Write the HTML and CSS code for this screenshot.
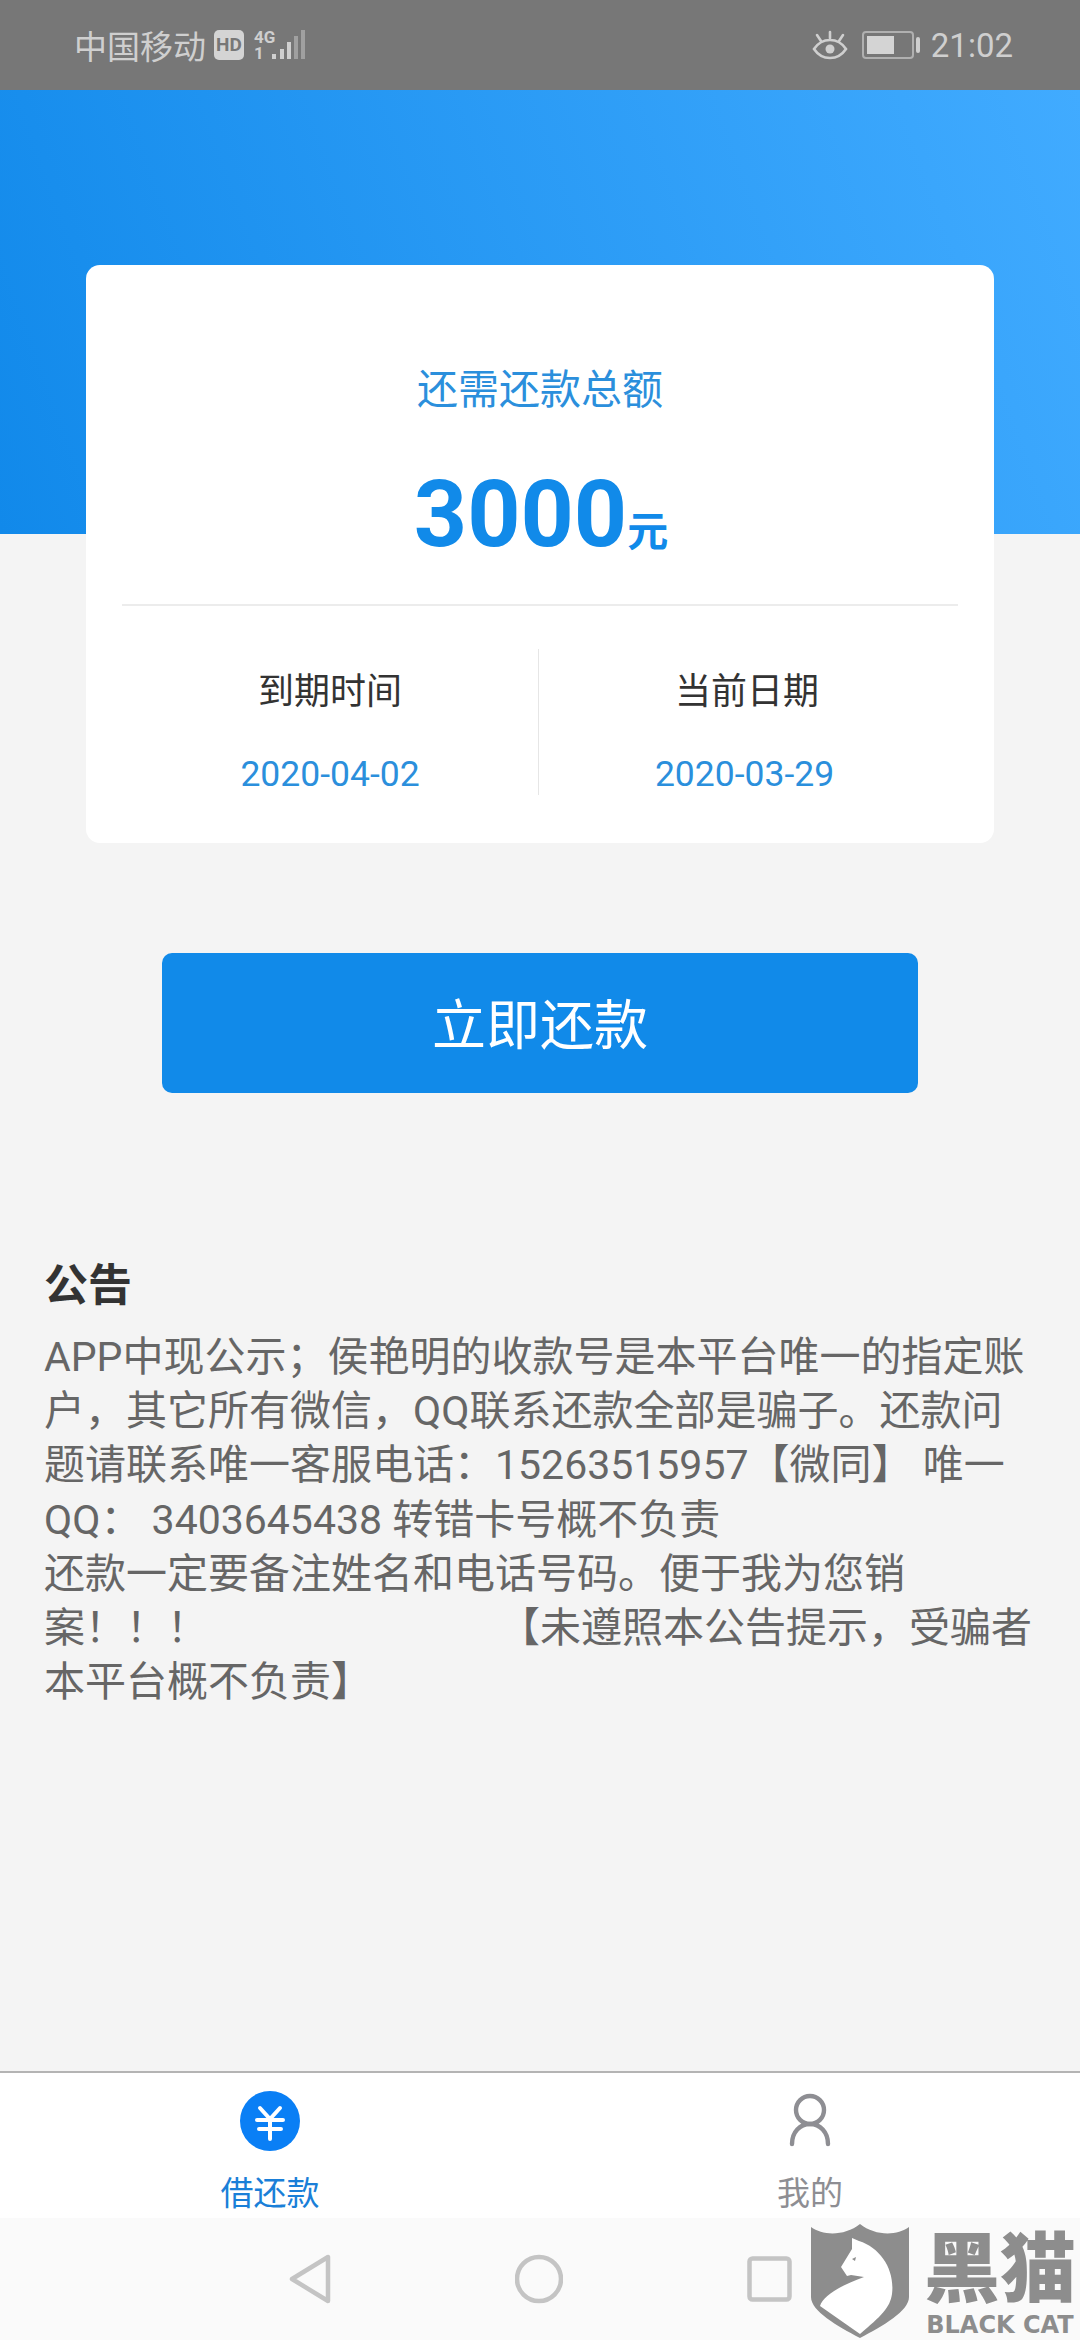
FILE: index.html
```html
<!DOCTYPE html>
<html>
	<head>
		<meta charset="utf-8">
		<title>借还款</title>
		<link rel="stylesheet" href="styles.css">
	</head>
	<body>
		<div id="container">
			<div class="status-bar">
				<div class="status-left">
					<span class="carrier">中国移动</span>
					<span class="hd-badge">HD</span>
					<span class="net-type"><b>4G</b><b>1</b></span>
					<svg class="signal" width="36" height="32" viewBox="0 0 36 32">
						<rect x="1" y="25" width="4" height="5" fill="#cfcfcf"/>
						<rect x="9" y="20" width="4" height="10" fill="#cfcfcf"/>
						<rect x="16" y="13" width="4" height="17" fill="#cfcfcf"/>
						<rect x="23" y="7" width="4" height="23" fill="#a0a0a0"/>
						<rect x="30" y="1" width="4" height="29" fill="#a0a0a0"/>
					</svg>
				</div>
				<div class="status-right">
					<svg width="36" height="30" viewBox="0 0 36 30" fill="none" stroke="#cfcfcf" stroke-width="2.6">
						<path d="M2 19c4-6 9-9 16-9s12 3 16 9c-4 6-9 9-16 9s-12-3-16-9z"/>
						<circle cx="18" cy="19" r="4.5" fill="#cfcfcf" stroke="none"/>
						<path d="M18 2v6M5 5l4 6M31 5l-4 6" stroke-linecap="round"/>
					</svg>
					<div class="battery"><div class="battery-level"></div></div>
					<div class="battery-cap"></div>
					<span class="clock">21:02</span>
				</div>
			</div>

			<div class="hero"></div>

			<div class="card">
				<div class="card-title">还需还款总额</div>
				<div class="card-amount"><span class="amount-num">3000</span><span class="amount-unit">元</span></div>
				<div class="card-dates">
					<div class="date-col">
						<div class="date-label">到期时间</div>
						<div class="date-value">2020-04-02</div>
					</div>
					<div class="date-col">
						<div class="date-label">当前日期</div>
						<div class="date-value">2020-03-29</div>
					</div>
				</div>
			</div>

			<div class="btn-repay">立即还款</div>

			<div class="notice">
				<div class="notice-title">公告</div>
				<div class="notice-body">APP中现公示；侯艳明的收款号是本平台唯一的指定账<br>户，其它所有微信，QQ联系还款全部是骗子。还款问<br>题请联系唯一客服电话：15263515957【微同】 唯一<br>QQ： 3403645438 转错卡号概不负责<br>还款一定要备注姓名和电话号码。便于我为您销<br>案！！！<span class="notice-gap"></span>【未遵照本公告提示，受骗者<br>本平台概不负责】</div>
			</div>

			<div class="tab-bar">
				<div class="tab tab-active">
					<svg width="62" height="62" viewBox="0 0 62 62">
						<circle cx="31" cy="31" r="30" fill="#0a7ff5"/>
						<path d="M21 18l10 11 10-11M18 30h26M20 39h22M31 29v20" fill="none" stroke="#fff" stroke-width="4" stroke-linecap="round"/>
					</svg>
					<span class="tab-label">借还款</span>
				</div>
				<div class="tab">
					<svg width="62" height="62" viewBox="0 0 62 62" fill="none" stroke="#8e8e93" stroke-width="4.4" stroke-linecap="round">
						<circle cx="31" cy="20" r="14"/>
						<path d="M13 54c0-12 8-20 18-20s18 8 18 20"/>
					</svg>
					<span class="tab-label">我的</span>
				</div>
			</div>

			<div class="nav-bar">
				<svg width="42" height="50" viewBox="0 0 42 50" fill="none" stroke="#c4c4c4" stroke-width="4.5" stroke-linejoin="round">
					<path d="M39 3v44L3 25z"/>
				</svg>
				<svg width="48" height="50" viewBox="0 0 48 50" fill="none" stroke="#c4c4c4" stroke-width="4.5">
					<circle cx="24" cy="25" r="22"/>
				</svg>
				<svg width="45" height="46" viewBox="0 0 45 46" fill="none" stroke="#c4c4c4" stroke-width="4.5">
					<rect x="2.5" y="2.5" width="40" height="41" rx="3"/>
				</svg>
			</div>

			<div class="stamp">
				<svg width="98" height="114" viewBox="0 0 98 114">
					<path d="M0 3c12 9 34 9 49-3 15 12 37 12 49 3v70c0 14-26 29-49 41C26 102 0 87 0 73z" fill="#8d8d8d"/>
					<path d="M41 14l7 3C70 24 84 46 81 70 79 84 70 92 49 110L9 82C12 72 28 62 53 53L40 51 36 52 30 43 41 25z" fill="#fff"/>
					<path d="M41 35l4-2-1 4z" fill="#8d8d8d"/>
				</svg>
				<div class="stamp-words">
					<div class="stamp-cn">黑猫</div>
					<div class="stamp-en">BLACK CAT</div>
				</div>
			</div>
		</div>
	</body>
</html>
```

FILE: styles.css
```css
html, body{
	margin:0;
	padding:0;
}

body{
	font-family:Roboto, "Noto Sans CJK SC", sans-serif;
}

#container{
	position:relative;
	display:flex;
	flex-direction:column;
	width:1080px;
	height:2340px;
	overflow:hidden;
	background-color:#f4f4f4;
}

.status-bar{
	display:flex;
	justify-content:space-between;
	align-items:center;
	height:90px;
	padding:0 67px 0 74px;
	background-color:#777;
	color:#cfcfcf;
	box-sizing:border-box;
	flex:none;
}

.status-left, .status-right{
	display:flex;
	align-items:center;
}

.carrier{
	font-size:33px;
}

.hd-badge{
	display:block;
	width:30px;
	height:30px;
	line-height:30px;
	margin-left:8px;
	border-radius:5px;
	background-color:#d4d4d4;
	color:#777;
	font-size:19px;
	font-weight:bold;
	text-align:center;
}

.net-type{
	display:flex;
	flex-direction:column;
	width:18px;
	margin-left:10px;
	font-size:17px;
	line-height:16px;
}

.signal{
	margin-left:-1px;
}

.battery{
	width:52px;
	height:28px;
	margin-left:14px;
	padding:3px;
	border:2px solid #b0b0b0;
	border-radius:4px;
	box-sizing:border-box;
}

.battery-level{
	width:27px;
	height:100%;
	background-color:#d4d4d4;
}

.battery-cap{
	width:4px;
	height:16px;
	margin:0 11px 0 2px;
	border-radius:2px;
	background-color:#cfcfcf;
}

.clock{
	font-size:33px;
}

.hero{
	height:444px;
	flex:none;
	background:linear-gradient(70deg, #1189ea, #41abff);
}

.card{
	flex:none;
	height:578px;
	margin:-269px 86px 0;
	padding:0 36px;
	border-radius:14px;
	background-color:#fff;
	box-sizing:border-box;
}

.card-title{
	padding-top:100px;
	line-height:50px;
	font-size:41px;
	color:#2b8fdc;
	text-align:center;
}

.card-amount{
	display:flex;
	justify-content:center;
	align-items:baseline;
	height:104px;
	margin-top:48px;
	padding:0 0 37px 2px;
	border-bottom:2px solid #ececec;
	color:#118ae9;
	line-height:104px;
}

.amount-num{
	font-size:93px;
	font-weight:bold;
}

.amount-unit{
	font-size:41px;
	font-weight:bold;
}

.card-dates{
	display:flex;
	margin-top:43px;
}

.date-col{
	flex:1;
	height:146px;
	text-align:center;
}

.date-col:first-child{
	flex:none;
	width:417px;
	border-right:1px solid #e6e6e6;
	box-sizing:border-box;
}

.date-col:last-child{
	padding-right:8px;
}

.date-label{
	padding-top:18px;
	line-height:50px;
	font-size:36px;
	color:#333;
}

.date-col:last-child .date-label{
	padding-left:5px;
}

.date-value{
	margin-top:35px;
	line-height:44px;
	font-size:35.5px;
	color:#2b8fdc;
}

.btn-repay{
	flex:none;
	height:140px;
	line-height:148px;
	margin:110px 162px 0;
	border-radius:10px;
	background-color:#118ae9;
	color:#fff;
	font-size:54px;
	text-align:center;
}

.notice{
	flex:1;
	padding:163px 36px 0 44px;
}

.notice-title{
	line-height:60px;
	font-size:44px;
	font-weight:bold;
	color:#333;
}

.notice-body{
	margin-top:14px;
	line-height:54.2px;
	font-size:41px;
	color:#666;
	white-space:nowrap;
}

.notice-gap{
	display:inline-block;
	width:291px;
}

.tab-bar{
	display:flex;
	flex:none;
	height:147px;
	border-top:2px solid #b4b4b4;
	background-color:#fff;
	box-sizing:border-box;
}

.tab{
	flex:1;
	display:flex;
	flex-direction:column;
	align-items:center;
	padding-top:17px;
	color:#8e8e93;
}

.tab-active{
	color:#1a7fd8;
}

.tab-label{
	margin-top:20px;
	line-height:44px;
	font-size:33px;
}

.nav-bar{
	display:flex;
	justify-content:center;
	align-items:center;
	gap:184px;
	flex:none;
	height:122px;
	background-color:#fafafa;
	box-sizing:border-box;
}

/* shield mark sitting over the bottom right corner */
.stamp{
	position:absolute;
	left:811px;
	bottom:2px;
	display:flex;
	color:#8d8d8d;
}

.stamp-words{
	width:156px;
	margin-left:13px;
	padding-top:8px;
	text-align:center;
}

.stamp-cn{
	height:76px;
	line-height:76px;
	font-size:76px;
	font-weight:900;
	white-space:nowrap;
}

.stamp-en{
	margin-top:5px;
	line-height:24px;
	font-family:"DejaVu Sans", sans-serif;
	font-size:24px;
	font-weight:bold;
	white-space:nowrap;
}
```
